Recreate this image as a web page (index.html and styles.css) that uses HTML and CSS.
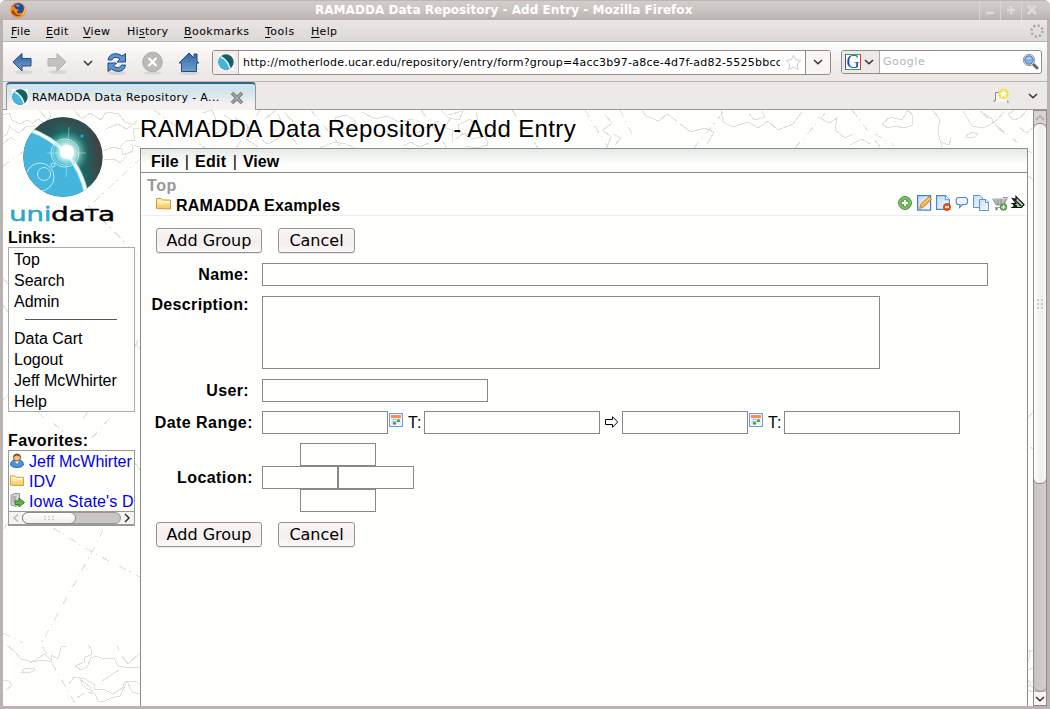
FILE: index.html
```html
<!DOCTYPE html>
<html lang="en">
<head>
<meta charset="utf-8">
<title>RAMADDA Data Repository - Add Entry</title>
<link rel="stylesheet" href="styles.css">
</head>
<body>
<svg class="defs" width="0" height="0">
<defs>
<linearGradient id="blue" x1="0" y1="0" x2="0" y2="1"><stop offset="0" stop-color="#3465a4"/><stop offset="1" stop-color="#729fcf"/></linearGradient>
<linearGradient id="paper" x1="0" y1="0" x2="1" y2="1"><stop offset="0" stop-color="#c4def8"/><stop offset="1" stop-color="#f4faff"/></linearGradient>
<linearGradient id="gold" x1="0" y1="0" x2="0" y2="1"><stop offset="0" stop-color="#fff3b8"/><stop offset="1" stop-color="#f3c95a"/></linearGradient>
<linearGradient id="dark" x1="0" y1="0.3" x2="1" y2="0.2"><stop offset="0" stop-color="#3b4548"/><stop offset=".3" stop-color="#20585a"/><stop offset=".5" stop-color="#078076"/><stop offset=".75" stop-color="#22605f"/><stop offset=".9" stop-color="#3b4548"/></linearGradient>
<linearGradient id="shade" x1="0" y1="0" x2="0" y2="1"><stop offset="0" stop-color="#3b4548"/><stop offset=".3" stop-color="#3b4548" stop-opacity="0"/></linearGradient>
<radialGradient id="glow"><stop offset="0" stop-color="#fff"/><stop offset=".35" stop-color="#fff"/><stop offset=".6" stop-color="#c8f5f0" stop-opacity=".65"/><stop offset="1" stop-color="#20a8a0" stop-opacity="0"/></radialGradient>
<clipPath id="disc"><circle cx="40" cy="40" r="39.7"/></clipPath>
<symbol id="globe" viewBox="0 0 16 16"><rect width="16" height="16" fill="#fff"/><circle cx="8" cy="8" r="7.7" fill="#16605f"/><path d="M2.5 2.5C7 5 11 10 12 14.5A7.7 7.7 0 0 1 2.5 2.5Z" fill="#45b5dd"/><path d="M2.500 2.500C7 5 11 10 12 14.500" fill="none" stroke="#d8f6fa" stroke-width="1.500"/></symbol>
<symbol id="chev" viewBox="0 0 10 6"><path d="M1 1L5 4.8L9 1" fill="none" stroke="#333" stroke-width="1.500"/></symbol>
<symbol id="folder" viewBox="0 0 15 13"><path d="M.5 11.500V1.500H5L6.500 3H14.500V12Z" fill="url(#gold)" stroke="#d99a2b"/><path d="M2 4.500H13.500M3 6.500H7L8 5.500H13" stroke="#fffbe0" fill="none"/></symbol>
<symbol id="cal" viewBox="0 0 14 14"><rect x=".5" y=".5" width="13" height="13" fill="#edf5ff" stroke="#6b9bd8"/><rect x="2" y="2" width="10" height="3" fill="#f59050"/><path d="M2.500 6.500H11.500M2.500 8.500H11.500M2.500 10.500H8M4.500 5V12M6.500 5V12M9.500 5V10" stroke="#a9c3e4" stroke-width=".7"/><rect x="4" y="9" width="3" height="2.500" fill="#5c9e45"/><rect x="8" y="6.500" width="3" height="2.500" fill="#5c9e45"/></symbol>
<symbol id="doc" viewBox="0 0 15 16"><path d="M.6 .6H10L14.400 5V15.400H.6Z" fill="url(#paper)" stroke="#4d86cf" stroke-width="1.200"/><path d="M10 .6V5H14.400" fill="#fff" stroke="#4d86cf"/></symbol>
</defs>
</svg>
<div class="window">
  <header class="titlebar">
    <svg class="fox" width="16" height="16" viewBox="0 0 16 16"><circle cx="8" cy="8" r="7.500" fill="#e66b12"/><circle cx="8.500" cy="6.500" r="5.300" fill="#20499b"/><path d="M5 3L8 2.500L10 4L8 5Z" fill="#6fa9e6"/><path d="M1 4C0 12 5 16 9 15.500C14 15 16 11 15 6C14 10 12 12 9 11.500C6 11 7 9 9 8L6 7L4 4L3 5Z" fill="#ef8c17"/><path d="M1.500 9C3 14 8 15 12 13C9 13.500 5 13 3.500 8Z" fill="#b92e12"/><path d="M14.500 5C16 9 14 13 11 14C14 11 14 8 14.500 5Z" fill="#ffd33c"/></svg>
    <h1 class="wintitle">RAMADDA Data Repository - Add Entry - Mozilla Firefox</h1>
    <div class="winbtns">
      <span><svg width="12" height="12" viewBox="0 0 12 12"><path d="M2 9H10" stroke="#e0dad9" stroke-width="2.500"/></svg></span>
      <span><svg width="12" height="12" viewBox="0 0 12 12"><path d="M2 6H10M6 2V10" stroke="#e0dad9" stroke-width="2.500"/></svg></span>
      <span><svg width="12" height="12" viewBox="0 0 12 12"><path d="M2 2L10 10M10 2L2 10" stroke="#e0dad9" stroke-width="2.500"/></svg></span>
    </div>
  </header>
  <nav class="menubar">
    <span class="m1"><u>F</u>ile</span><span class="m2"><u>E</u>dit</span><span class="m3"><u>V</u>iew</span><span class="m4">Hi<u>s</u>tory</span><span class="m5"><u>B</u>ookmarks</span><span class="m6"><u>T</u>ools</span><span class="m7"><u>H</u>elp</span>
    <svg class="throbber" width="14" height="14" viewBox="0 0 14 14"><circle cx="7" cy="7" r="5.500" fill="none" stroke="#aaa4a2" stroke-width="2.500" stroke-dasharray="2 2.320"/></svg>
  </nav>
  <div class="toolbar">
    <svg class="navicons" width="209" height="34" viewBox="0 0 209 34">
      <g fill="#000" opacity=".08"><ellipse cx="21" cy="26" rx="9" ry="2"/><ellipse cx="55" cy="26" rx="9" ry="2"/><ellipse cx="114" cy="27" rx="9" ry="2"/><ellipse cx="150" cy="27" rx="9" ry="1.500"/><ellipse cx="186" cy="27" rx="10" ry="2"/></g>
      <path d="M10 16L19 7.500V12.500H28V20H19V25Z" fill="url(#blue)" stroke="#204a87"/>
      <path d="M63 16L54 7.500V12.500H45V20H54V25Z" fill="#c5c1bf" stroke="#b4b0ae"/>
      <path d="M81 15L85 19L89 15" fill="none" stroke="#333" stroke-width="1.500"/>
      <path d="M105 14C106 7 114 6 119 10L122.500 7.500V16H114L117 13C113 10.500 110 11 109 14Z" fill="#5c92cf" stroke="#204a87"/>
      <path d="M122.500 19C121.500 26 114 27 108.500 23L105 25.500V17H113.500L110.500 20C114 22.500 117 22 118.500 19Z" fill="#5c92cf" stroke="#204a87"/>
      <circle cx="149.500" cy="16" r="9.800" fill="#bdb9b7" stroke="#b0acaa"/><path d="M145.500 12L153.500 20M153.500 12L145.500 20" stroke="#fff" stroke-width="2.300"/>
      <path d="M186 7L191 12V8H194V15L196 17H193.500V25.500H178.500V17H176Z" fill="url(#blue)" stroke="#204a87"/>
    </svg>
    <div class="urlbar">
      <span class="favicon"><svg width="16" height="16"><use href="#globe"/></svg></span>
      <span class="url">http://motherlode.ucar.edu/repository/entry/form?group=4acc3b97-a8ce-4d7f-ad82-5525bbcc</span>
      <svg class="star" width="17" height="17" viewBox="0 0 17 17"><path d="M8.500 1L10.700 5.800L16 6.300L12.200 10L13.200 15.500L8.500 13L3.800 15.500L4.800 10L1 6.300L6.300 5.800Z" fill="#fff" stroke="#ccc"/></svg>
      <span class="drop"><svg width="10" height="6"><use href="#chev"/></svg></span>
    </div>
    <div class="search">
      <span class="engine"><b>G</b><svg width="10" height="6"><use href="#chev"/></svg></span>
      <span class="ph">Google</span>
      <svg width="17" height="17" viewBox="0 0 17 17"><path d="M10 10L15 15" stroke="#666" stroke-width="3" stroke-linecap="round"/><circle cx="7" cy="7" r="5.700" fill="#eee" stroke="#999"/><circle cx="7" cy="7" r="4.200" fill="#83b2e3" stroke="#467ab5"/><path d="M4.500 6C5.500 4 8 4 9.500 5.500Z" fill="#d2e8fb"/></svg>
    </div>
  </div>
  <div class="tabbar">
    <div class="tab"><svg width="16" height="16"><use href="#globe"/></svg><span>RAMADDA Data Repository - A...</span><svg class="close" width="14" height="14" viewBox="0 0 14 14"><path d="M2 2L12 12M12 2L2 12" stroke="#777" stroke-width="3.600"/><path d="M2.500 2.500L11.500 11.500M11.500 2.500L2.500 11.500" stroke="#aaa" stroke-width="1.600"/></svg></div>
    <svg class="newtab" width="17" height="15" viewBox="0 0 17 15"><path d="M1 14V12.500H2.500V4.500H8M14 12V14H16" fill="none" stroke="#888"/><rect x="3" y="5" width="11" height="9" fill="#f6f5f4"/><circle cx="10.500" cy="5.800" r="5.300" fill="#f3e15a"/><path d="M10.500 2L11.600 4.600L14.300 4.900L12.300 6.700L12.900 9.400L10.500 8L8.100 9.400L8.700 6.700L6.700 4.900L9.400 4.600Z" fill="#fff"/></svg>
    <svg class="alltabs" width="10" height="6"><use href="#chev"/></svg>
  </div>
  <main class="viewport">
    <svg class="map" width="1030" height="596" viewBox="3 110 1030 596" shape-rendering="crispEdges">
      <g fill="none" stroke="#dedede">
        <path d="M3 115L9 113L12 120L20 124L27 120L33 123L38 119L44 123L51 117L49 111M9 127L19 133L27 126L36 127M39 110L47 119L56 128M74 110L82 119L90 113L101 120L106 112L119 114L125 122L134 125L137 120M98 153L113 147L122 149L123 155L133 151L132 145L140 147M120 147L126 141L135 140L133 129L140 128M104 160L114 159L120 163L127 156M106 129L118 124L126 129L132 126M3 144L11 137L15 141M10 125L7 134L3 137"/>
        <path d="M203 113L212 110L216 119L210 124L202 122M224 115L235 122L230 133L223 128L214 135M235 118L248 126L246 139L258 147M265 119L276 110M278 114L283 125L280 137L268 144L262 140M284 112L296 125L291 137L298 145M335 118L346 115L356 121L352 129L340 128ZM320 148L334 142L346 144L355 148M362 112L375 119L387 116L399 122L413 119M382 133L397 130L409 135L421 131M403 146L411 142L419 147L429 143M417 120L425 128L438 121L444 127M441 110L450 119L445 127L453 131L452 142M448 115L463 111L459 120L449 118M458 125L470 119L475 125L471 135L458 132ZM455 140L463 134L473 139L486 136L488 145L477 148L465 146M472 123L478 119L476 112"/>
        <path d="M605 115L612 123L603 130L611 137L607 147M613 134L621 138L615 145M642 110L646 116L659 121L667 114L677 121M680 124L691 132L704 128L714 132L707 144M721 110L723 122L733 127L748 122L758 128L768 121L778 130L793 124L802 112M749 113L754 120L765 117L762 111M818 117L829 123L837 118L835 130L845 138L853 134M850 145L862 139L870 144"/>
        <path d="M882 124L890 117L902 120L908 110L913 116L912 125L905 128L894 126L888 128ZM932 110L940 119L938 132L942 147M940 142L949 145L951 138M966 136L972 132L978 134L975 137L967 138ZM963 111L972 126L982 128L990 125L998 119L1004 112M980 111L992 119L996 126L1005 134M1015 110L1008 114L1013 120L1020 118L1027 110M1019 127L1026 133L1033 128M1020 148L1032 153M1027 175L1033 180"/>
        <g stroke-dasharray="8 4 1 6">
          <path d="M80 215L140 159M3 166L43 138M88 205L140 258M135 344L140 349M135 347L140 336M3 400L8 395M3 305L8 312M3 278L8 284M38 412L44 418M88 412L82 420M53 423L66 434M110 418L90 440M135 463L140 470M3 529L8 523M53 528L92 552L140 577M103 530L92 552L41 644L76 705M3 633L23 643"/>
          <path d="M154 110L205 148M236 148L260 110M311 110L342 148M421 110L447 148M512 110L538 148M585 110L608 148M620 110L633 136M694 148L725 110M795 148L828 110M852 110L881 148M875 134L895 146M983 114L1024 148M1028 418L1033 412M1030 447L1033 449"/>
        </g>
        <path d="M7 645L14 651L21 659L33 662L43 660L51 662L51 655L58 659L61 647L66 646M22 672L25 668L34 668L35 670L29 673L24 672ZM3 680L9 681L12 685L6 690M30 663L45 654L52 661M88 645L92 650L91 655L85 657L84 662L75 666L81 670L87 667L91 658L95 656L104 659L114 658L118 666L130 668L140 667M117 646L119 650M122 656L128 664L140 653M69 684L74 677L85 679L95 685L94 689L105 690L113 694L122 688L125 682L136 681L140 685M80 679L90 687L93 692L83 686ZM88 692L95 694L98 701L103 702L111 698L120 696L127 681L132 692L140 694M102 681L119 670M77 698L84 693"/>
        <path d="M1028 652L1033 650M1029 650L1030 658L1027 662M1028 671L1033 667M1028 680L1033 688M1027 688L1033 681M1028 690L1033 692"/>
      </g>
    </svg>
    <aside class="sidebar">
      <svg class="logo" width="80" height="80" viewBox="0 0 80 80"><g clip-path="url(#disc)"><rect width="80" height="80" fill="url(#dark)"/><rect width="80" height="80" fill="url(#shade)"/><circle cx="43" cy="36" r="23" fill="url(#glow)" opacity=".8"/><path d="M5 12Q28 20 43 36Q59 53 64 80H0V0Z" fill="#45b5dd"/><path d="M5 12Q28 20 43 36Q59 53 64 80" fill="none" stroke="#8be6e8" stroke-width="5" opacity=".7"/><path d="M5 12Q28 20 43 36Q59 53 64 80" fill="none" stroke="#fff" stroke-width="3"/><circle cx="43" cy="36" r="15" fill="url(#glow)" opacity=".8"/><g fill="none" stroke="#b9efec"><circle cx="42" cy="36" r="14"/><circle cx="42" cy="36" r="12" opacity=".6"/><circle cx="17" cy="60" r="14"/><circle cx="21" cy="57" r="6.500"/><circle cx="30" cy="48" r="2"/><path d="M46 10L43 60M24 36H63" opacity=".5"/></g><circle cx="44" cy="35" r="7" fill="#fff"/><circle cx="59" cy="19" r="1.500" fill="#28b3df"/></g></svg>
      <div class="wordmark"><span>uni</span>da<small>T</small>a</div>
      <h2>Links:</h2>
      <div class="links"><a>Top</a><a>Search</a><a>Admin</a><hr><a>Data Cart</a><a>Logout</a><a>Jeff McWhirter</a><a>Help</a></div>
      <h2 class="favhead">Favorites:</h2>
      <div class="favs">
        <a><svg width="14" height="15" viewBox="0 0 14 15"><path d="M.5 12C.5 8 3 7 7 7S13.500 8 13.500 12Q12 14.500 7 14.500T.5 12Z" fill="#4c93dc" stroke="#2d68ae"/><path d="M5 8L7 11L9 8Z" fill="#fff"/><circle cx="7" cy="4.500" r="3.600" fill="#f4c08c" stroke="#8a5222"/><path d="M3.400 4C4 0 10 0 10.600 4L7 2.500Z" fill="#8a5222"/></svg>Jeff McWhirter</a>
        <a><svg width="14" height="13"><use href="#folder"/></svg>IDV</a>
        <a class="iowa"><svg width="15" height="15" viewBox="0 0 15 15"><path d="M1 2L5 .5H9.500V11L6 13.500L1 12Z" fill="#d3d6d3" stroke="#999"/><path d="M2.500 4H6M2.500 6H6M2.500 8H6" stroke="#888"/><path d="M5 8H9V5L14.500 9.500L9 14V11.500H5Z" fill="#5fb245" stroke="#2f7a25"/></svg>Iowa State's D</a>
        <div class="hscroll"><svg width="13" height="12" viewBox="0 0 13 12"><path d="M9 2.500L5 6L9 9.500" fill="none" stroke="#bbb" stroke-width="1.500"/></svg><div class="htrack"><div class="hthumb"><i></i></div></div><svg width="13" height="12" viewBox="0 0 13 12"><path d="M4 2L8 6L4 10" fill="none" stroke="#333" stroke-width="1.500"/></svg></div>
      </div>
    </aside>
    <section class="page">
      <h1>RAMADDA Data Repository - Add Entry</h1>
      <div class="panel">
        <nav class="pagemenu"><b>File</b><i>|</i><b>Edit</b><i>|</i><b>View</b></nav>
        <div class="crumb">Top</div>
        <div class="entry">
          <svg width="15" height="13"><use href="#folder"/></svg><b>RAMADDA Examples</b>
          <svg class="tools" width="128" height="16" viewBox="0 0 128 16">
            <circle cx="7" cy="8" r="6.400" fill="#62b04e" stroke="#3c8b35"/><circle cx="7" cy="8" r="5.300" fill="none" stroke="#a9d99c" stroke-width=".7"/><path d="M7 5V11M4 8H10" stroke="#fff" stroke-width="2"/>
            <rect x="19.600" y=".6" width="13" height="14.500" fill="url(#paper)" stroke="#3f7dcc" stroke-width="1.200"/><path d="M21.500 13.500L23 9L31 1.500L33.500 4.500L25.500 12Z" fill="#f5ab3c" stroke="#c07b2b" stroke-width=".8"/><path d="M24 10L32 3" stroke="#ffe09a"/>
            <use href="#doc" x="38" width="14" height="15"/><circle cx="49" cy="12" r="3.600" fill="#e25c1e" stroke="#b43b0c" stroke-width=".8"/><path d="M47 12H51" stroke="#fff" stroke-width="1.500"/>
            <path d="M60 2.500H67C70.500 2.500 70.500 9.500 67 9.500H64.500L61.500 12.500L62 9.500H60C57.500 9.500 57.500 2.500 60 2.500Z" fill="#edf6ff" stroke="#4d86cf" stroke-width="1.100"/>
            <path d="M75.500 .5H82L84.500 3V12.500H75.500Z" fill="url(#paper)" stroke="#5d92d6"/><path d="M81.500 4.500H88L90.500 7V15.500H81.500Z" fill="url(#paper)" stroke="#5d92d6"/><path d="M87.500 4.500V7.500H90.500" fill="#fff" stroke="#5d92d6"/>
            <path d="M105 2.500H109.500L106 10H98L94.500 3.500" fill="none" stroke="#999"/><path d="M96 4H108L106 9.500H98.500Z" fill="#ddd" stroke="#999" stroke-width=".8"/><path d="M97 6H107M98 8H107M100 4V10M103 4V10M97 12.500H105" stroke="#888" stroke-width=".8"/><circle cx="98.500" cy="14" r="1.200" fill="#777"/><circle cx="105.500" cy="12" r="3.300" fill="#5ead4b" stroke="#3c8b35" stroke-width=".8"/><path d="M103.500 12H107.500M105.500 10V14" stroke="#fff" stroke-width="1.200"/>
            <path d="M114.500 3.500L118 4.500V1.500L126 9.500L123.500 12.500H114.500L118 10.500L114.500 8.500H118Z" fill="#a8ceaa" stroke="#111" stroke-width="1.200"/><path d="M116 4L123 11M115 9.500L119 12" stroke="#111" stroke-width="1.200"/>
          </svg>
        </div>
        <form>
          <div class="buttons"><button type="button">Add Group</button><button type="button" class="cancel">Cancel</button></div>
          <div class="row name"><label>Name:</label><input></div>
          <div class="row desc"><label>Description:</label><textarea></textarea></div>
          <div class="row user"><label>User:</label><input></div>
          <div class="row date"><label>Date Range:</label><input class="d"><svg width="14" height="14"><use href="#cal"/></svg><span>T:</span><input class="t"><svg class="arrow" width="14" height="12" viewBox="0 0 14 12"><path d="M.5 3.500H7.500V.8L12.800 6L7.500 11.200V8.500H.5Z" fill="#fff" stroke="#000"/></svg><input class="d"><svg width="14" height="14"><use href="#cal"/></svg><span>T:</span><input class="t"></div>
          <div class="row loc"><label>Location:</label><div class="bbox"><input><div><input><input></div><input></div></div>
          <div class="buttons"><button type="button">Add Group</button><button type="button" class="cancel">Cancel</button></div>
        </form>
      </div>
    </section>
    <div class="vscroll"><div class="up"><svg width="10" height="6" viewBox="0 0 10 6"><path d="M1 5L5 1L9 5" fill="none" stroke="#aaa" stroke-width="1.500"/></svg></div><div class="vtrack"><div class="vthumb"><i></i></div></div><div class="down"><svg width="10" height="6"><use href="#chev"/></svg></div></div>
  </main>
</div>
</body>
</html>
```

FILE: styles.css
```css
* { box-sizing: border-box; }
body { margin: 0; background: #fff; font: 11px "DejaVu Sans", sans-serif; color: #000; overflow: hidden; }
svg { display: block; flex: none; }
.defs { position: absolute; }
.window { width: 1050px; height: 709px; display: flex; flex-direction: column; background: #bab3b2; border-radius: 6px 6px 0 0; overflow: hidden; padding: 0 3px 3px; }
.titlebar { height: 20px; margin: 0 -3px; display: flex; align-items: center; background: linear-gradient(#aaa09f 0, #d2cccb 1px, #cbc5c4 9px, #bcb4b3 19px, #b2aaa9); }
.fox { margin: -1px 0 0 10px; }
.wintitle { margin: 0; padding-left: 289px; flex: 1; font-size: 12px; line-height: 18px; color: #fff; letter-spacing: .04px; white-space: nowrap; }
.winbtns { display: flex; padding-right: 8px; }
.winbtns span { width: 21px; height: 19px; border-left: 1px solid #d9d4d3; display: flex; align-items: center; justify-content: center; }
.menubar { height: 22px; padding-top: 1px; display: flex; align-items: center; background: linear-gradient(#ebe6e5, #dcd8d6); border-bottom: 1px solid #bab4b2; white-space: nowrap; letter-spacing: .3px; }
.menubar u { text-underline-offset: 2px; }
.menubar span { flex: none; }
.m1 { width: 35px; margin-left: 8px; }
.m2 { width: 37px; }
.m3 { width: 44px; }
.m4 { width: 57px; }
.m5 { width: 81px; letter-spacing: .45px; }
.m6 { width: 46px; letter-spacing: .5px; }
.throbber { margin-left: auto; margin-right: 3px; }
.toolbar { height: 40px; display: flex; align-items: center; background: linear-gradient(#fff, #f7f4f3 12px, #ede9e7 30px); border-bottom: 1px solid #bab4b2; }
.navicons { margin-top: 2px; }
.urlbar { width: 619px; height: 25px; margin-top: 1px; border: 1px solid #948a8a; border-radius: 3px; background: #fff; display: flex; align-items: center; overflow: hidden; }
.favicon { width: 26px; height: 23px; padding: 3px 5px; background: #f1edec; border-right: 1px solid #b8b0b0; }
.url { width: 541px; padding-left: 4px; overflow: hidden; white-space: nowrap; letter-spacing: .23px; }
.star { margin-left: 5px; }
.drop { width: 25px; height: 23px; margin-left: auto; border-left: 1px solid #948a8a; background: #f8f5f4; display: flex; align-items: center; justify-content: center; }
.search { width: 201px; height: 24px; margin-left: 10px; border: 1px solid #948a8a; border-radius: 3px; background: #fff; display: flex; align-items: center; overflow: hidden; }
.engine { width: 38px; height: 22px; padding-left: 3px; background: #ede9e7; border-right: 1px solid #b0a8a8; display: flex; align-items: center; gap: 3px; }
.engine b { width: 16px; height: 16px; border: 1px solid #36a436; border-right-color: #d33; border-left-color: #2a56c4; background: #fff; font: 18px/15px "Liberation Serif", serif; color: #1a44b8; text-align: center; }
.ph { padding-left: 3px; color: #b6b6b6; flex: 1; letter-spacing: .6px; }
.search > svg { margin-right: 2px; }
.tabbar { height: 28px; display: flex; align-items: flex-end; background: #ede9e7; border-bottom: 1px solid #a09594; }
.tab { width: 250px; height: 28px; margin: 0 0 -1px 3px; padding: 0 0 0 5px; border: 1px solid #8b9ba6; border-top: 2px solid #30658a; border-bottom: 0; border-radius: 4px 4px 0 0; background: linear-gradient(#cfe1ec, #d8e6ed 10px, #f5f1f0 20px); display: flex; align-items: center; }
.tab span { padding-left: 4px; width: 202px; white-space: nowrap; letter-spacing: .37px; }
.close { margin: 2px 0 0 0; }
.newtab { margin: 0 0 6px auto; }
.alltabs { margin: 0 9px 10px 18px; }
.viewport { height: 596px; display: flex; position: relative; background: #fefefd; overflow: hidden; font: 16px/20px "Liberation Sans", Arial, sans-serif; }
.map { position: absolute; left: 0; top: 0; }
.sidebar { width: 137px; padding: 7px 5px 0; position: relative; }
.logo { margin: 0 0 0 15px; }
.wordmark { height: 30px; padding-top: 5px; margin-left: 1px; font: 19.5px/26px "DejaVu Sans", sans-serif; white-space: nowrap; transform: scaleX(1.44); transform-origin: left; letter-spacing: -.3px; -webkit-text-stroke: .4px; }
.wordmark span { color: #2ba5ca; }
.wordmark small { font-size: 15px; }
.sidebar h2 { margin: 0; padding-top: 1px; height: 20px; font-size: 16px; line-height: 20px; letter-spacing: .15px; }
.links { width: 127px; height: 165px; background: #fefefd; border: 1px solid #aaa; padding: 1px 5px; }
.links a { display: block; line-height: 21px; white-space: nowrap; }
.links hr { width: 92px; height: 1px; margin: 7px 0 8px 11px; border: 0; background: #555; }
.sidebar .favhead { margin-top: 18px; letter-spacing: .4px; }
.favs { width: 127px; height: 76px; border: 1px solid #999; background: #fefefd; overflow: hidden; }
.favs a { height: 20px; padding: 1px 0 0 1px; display: flex; gap: 5px; align-items: center; color: #00e; white-space: nowrap; }
.favs a svg { margin-top: -3px; }
.favs .iowa { gap: 4px; letter-spacing: .15px; }
.hscroll { height: 14px; display: flex; align-items: center; border: 1px solid #999; border-width: 1px 0; background: #f5f2f1; }
.htrack { flex: 1; height: 12px; background: #cbc5c3; border-radius: 6px; border: 1px solid #999; }
.hthumb { width: 54px; height: 12px; margin: -1px; border: 1px solid #948a8a; border-radius: 6px; background: linear-gradient(#fff, #f1edec); display: flex; align-items: center; justify-content: center; }
.hthumb i { width: 12px; height: 6px; background: radial-gradient(circle, #ccc .8px, transparent 1.2px) 0 0 / 4px 3px; }
.page { width: 888px; position: relative; }
.page h1 { margin: 0; height: 38px; font-size: 24px; line-height: 38px; font-weight: normal; white-space: nowrap; letter-spacing: .38px; }
.panel { height: 560px; width: 888px; border: 1px solid #888d88; background: #fefefd; }
.pagemenu { height: 24px; padding: 1px 0 0 10px; line-height: 23px; border-bottom: 1px solid #888d88; background: linear-gradient(#e4e9e6, #fefefd 15px); display: flex; }
.pagemenu b:nth-of-type(2) { letter-spacing: .3px; }
.pagemenu i { font-style: normal; width: 16.500px; text-align: center; }
.crumb { height: 22px; padding: 3px 0 0 6px; color: #999; font-weight: bold; letter-spacing: .6px; }
.entry { height: 21px; padding: 1px 0 0 15px; border-bottom: 1px solid #eee; display: flex; align-items: center; gap: 5px; letter-spacing: .2px; }
.entry > svg:first-child { margin-top: -5px; }
.tools { margin: -5px 1px 0 auto; }
.entry .tools { margin-top: -5px; }
.buttons { height: 35px; padding: 0 0 0 15px; display: flex; gap: 16px; }
form { padding-top: 12px; }
button { width: 106px; height: 25px; padding: 0; border: 1px solid #999090; border-radius: 3px; background: linear-gradient(#f9f6f5, #f4eeed 60%, #fbf9f8); box-shadow: 0 1px #ebe8e7; font: 16px/20px "DejaVu Sans", sans-serif; white-space: nowrap; color: #000; }
.cancel { width: 77px; }
.row { display: flex; height: 32px; }
.row label { width: 121px; padding: 1px 13px 0 0; flex: none; text-align: right; font-weight: bold; line-height: 21px; white-space: nowrap; letter-spacing: .35px; }
input, textarea { display: block; height: 23px; margin: 0; padding: 0; border: 1px solid #888; background: #fefefd; resize: none; outline: 0; flex: none; border-radius: 0; }
.name { height: 33px; }
.name input { width: 726px; }
.desc { height: 83px; }
.desc label { padding-top: 0; line-height: 18px; }
.desc textarea { width: 618px; height: 73px; }
.user input { width: 226px; }
.date label, .loc label { padding-right: 9px; letter-spacing: .45px; }
.date .d { width: 126px; }
.date .t { width: 176px; }
.date > svg { margin: 2px 0 0 1px; }
.date > span { width: 16px; margin-left: 5px; line-height: 23px; letter-spacing: 1px; }
.date .arrow { margin: 5px 3px 0 5px; }
.loc { height: 79px; }
.loc label { line-height: 69px; padding-top: 0; }
.bbox { display: flex; flex-direction: column; align-items: center; height: 69px; }
.bbox div { display: flex; }
.bbox input { width: 76px; }
.vscroll { width: 14px; margin-left: 5px; border: 1px solid #948a8a; background: #cbc5c3; display: flex; flex-direction: column; }
.up, .down { height: 13px; display: flex; align-items: center; justify-content: center; background: #d9d4d2; flex: none; }
.down { background: #f8f5f4; }
.vtrack { flex: 1; background: linear-gradient(90deg, #c7c1bf, #d5d0ce); border-radius: 6px; border-bottom: 1px solid #948a8a; }
.vthumb { width: 14px; height: 361px; margin: -1px 0 0 -1px; border: 1px solid #948a8a; border-radius: 6px; background: linear-gradient(90deg, #fff, #f1eceb 60%, #faf8f7); display: flex; align-items: center; justify-content: center; }
.vthumb i { width: 8px; height: 12px; background: radial-gradient(circle, #ccc .8px, transparent 1.2px) 0 0 / 4px 4px; }
```
